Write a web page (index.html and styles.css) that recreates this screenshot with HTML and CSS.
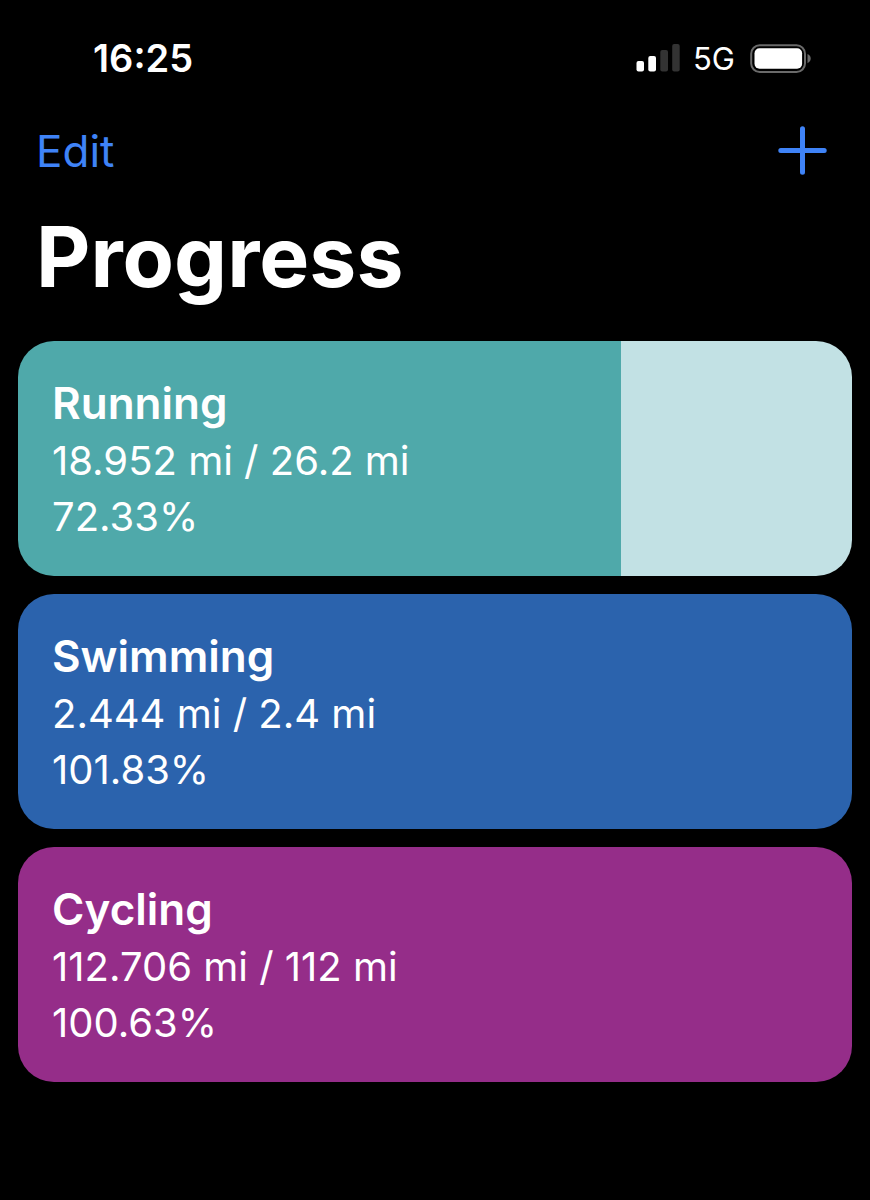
FILE: index.html
```html
<!DOCTYPE html>
<html lang="en">
<head>
<meta charset="utf-8">
<meta name="viewport" content="width=device-width, initial-scale=1">
<title>Progress</title>
<link rel="stylesheet" href="styles.css">
</head>
<body>
<div class="status">
  <time class="clock">16:25</time>
  <div class="indicators">
    <svg class="signal" width="44" height="28" viewBox="0 0 44 28" role="img" aria-label="Signal strength">
      <rect class="on" x="0.5" y="17" width="7.5" height="10.5" rx="2"/>
      <rect class="on" x="12.3" y="12" width="7.7" height="15.5" rx="2"/>
      <rect class="off" x="24.3" y="6" width="7.7" height="21.5" rx="2"/>
      <rect class="off" x="36.2" y="0" width="7.5" height="27.5" rx="2"/>
    </svg>
    <span class="network">5G</span>
    <svg class="battery" width="61" height="29" viewBox="0 0 61 29" role="img" aria-label="Battery full">
      <rect class="shell" x="1.2" y="1.2" width="53.8" height="26.800" rx="8.500"/>
      <rect class="on" x="4.5" y="4.2" width="47.6" height="20.6" rx="5"/>
      <path class="cap" d="M57.5 10c2 .8 3.2 2.4 3.2 4.600s-1.200 3.800-3.200 4.600z"/>
    </svg>
  </div>
</div>
<header class="toolbar">
  <button class="edit" type="button">Edit</button>
  <button class="add" type="button" aria-label="Add goal">
    <svg width="50" height="50" viewBox="0 0 50 50" aria-hidden="true"><path d="M24.500 2.800v43.400M2.800 24.500h43.400"/></svg>
  </button>
</header>
<main>
  <h1 class="title">Progress</h1>
  <ul class="goals">
    <li class="goal running" style="--done: 72.33%">
      <h2 class="name">Running</h2>
      <p class="detail">18.952 mi / 26.2 mi</p>
      <p class="detail">72.33%</p>
    </li>
    <li class="goal swimming" style="--done: 100%">
      <h2 class="name">Swimming</h2>
      <p class="detail">2.444 mi / 2.4 mi</p>
      <p class="detail">101.83%</p>
    </li>
    <li class="goal cycling" style="--done: 100%">
      <h2 class="name">Cycling</h2>
      <p class="detail">112.706 mi / 112 mi</p>
      <p class="detail">100.63%</p>
    </li>
  </ul>
</main>
</body>
</html>
```
FILE: styles.css
```css
* {
  box-sizing: border-box;
}

body {
  margin: 0;
  min-height: 100vh;
  background: #000;
  color: #fff;
  font-family: Inter, "Liberation Sans", sans-serif;
}

.status {
  display: flex;
  align-items: center;
  justify-content: space-between;
  padding: 34px 59px 0 93px;
}

.clock {
  font-size: 38px;
  font-weight: 600;
  line-height: 48px;
}

.indicators {
  display: flex;
  align-items: center;
}

.network {
  margin: 0 15px 0 13px;
  padding-top: 2px;
  font-size: 31px;
  line-height: 46px;
}

.on {
  fill: #fff;
}

.off {
  fill: #333;
}

.shell {
  fill: none;
  stroke: #6a6a6a;
  stroke-width: 2;
}

.cap {
  fill: #6a6a6a;
}

.toolbar {
  display: flex;
  align-items: center;
  justify-content: space-between;
  padding: 39px 42px 0 36px;
}

.edit,
.add {
  padding: 0;
  border: 0;
  background: none;
  color: #3f83f7;
  font: inherit;
  cursor: pointer;
}

.edit {
  font-size: 44px;
  line-height: 60px;
}

.add svg {
  display: block;
  fill: none;
  stroke: currentColor;
  stroke-width: 5;
  stroke-linecap: round;
}

.title {
  margin: 0;
  padding: 24px 36px 0;
  font-size: 84px;
  font-weight: 700;
  line-height: 104px;
}

.goals {
  display: grid;
  gap: 18px;
  margin: 0;
  padding: 32px 18px;
  list-style: none;
}

.goal {
  padding: 32px 34px 31px;
  border-radius: 36px;
  background: linear-gradient(to right, var(--color) var(--done), var(--rest) var(--done));
}

.running {
  --color: #4fa9aa;
  --rest: #c2e1e4;
}

.swimming {
  --color: #2b63ad;
  --rest: #bccfe8;
}

.cycling {
  --color: #952d89;
  --rest: #e2c0de;
}

.name,
.detail {
  margin: 0;
}

.name {
  font-size: 44px;
  font-weight: 600;
  line-height: 60px;
}

.detail {
  font-size: 40px;
  line-height: 56px;
}
```
